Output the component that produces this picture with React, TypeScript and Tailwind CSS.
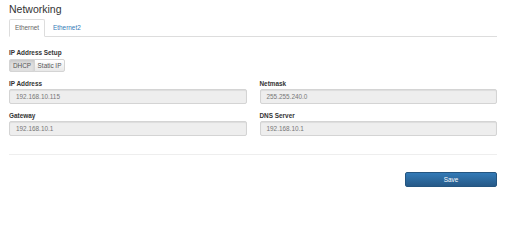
import React from "react";

function Field({ label, value }: { label: string; value: string }) {
  return (
    <div className="flex flex-col">
      <label className="h-[9px] text-[6.4px] leading-[9px] font-bold text-[#333]">{label}</label>
      <div className="mt-[1px] flex h-[15px] items-center rounded-[2px] border border-[#d4d4d4] bg-[#eee] px-[6px] text-[6.4px] text-[#777] shadow-[inset_0_1px_1px_rgba(0,0,0,0.075)]">
        {value}
      </div>
    </div>
  );
}

export default function App() {
  return (
    <div className="min-h-[204px] w-[517px] bg-white pl-[9px] pr-[20px] pt-[3px] font-['Liberation_Sans',Arial,sans-serif] text-[#333]">
      {/* Title */}
      <h3 className="h-[13px] text-[10.5px] leading-[13px] font-normal">Networking</h3>

      {/* Tabs */}
      <div className="mt-[3px] flex h-[18px] items-end border-b border-[#ddd]">
        <div className="-mb-px flex h-[18px] w-[36px] items-center justify-center rounded-t-[2px] border border-[#ddd] border-b-white bg-white text-[6.4px] text-[#666]">
          Ethernet
        </div>
        <div className="flex h-[17px] items-center px-[8px] text-[6.4px] text-[#337ab7]">Ethernet2</div>
      </div>

      {/* IP setup */}
      <div className="mt-[11px] h-[9px] text-[6.4px] leading-[9px] font-bold">IP Address Setup</div>
      <div className="mt-[2px] flex h-[13px] text-[6.4px] text-[#555]">
        <div className="flex w-[26px] items-center justify-center rounded-l-[2px] border border-[#d4d4d4] bg-[#e0e0e0] shadow-[inset_0_2px_3px_rgba(0,0,0,0.1)]">
          DHCP
        </div>
        <div className="-ml-px flex w-[31px] items-center justify-center rounded-r-[2px] border border-[#d4d4d4] bg-gradient-to-b from-white to-[#e8e8e8]">
          Static IP
        </div>
      </div>

      {/* Fields */}
      <div className="mt-[7px] grid grid-cols-2 gap-x-[13px] gap-y-[7px]">
        <Field label="IP Address" value="192.168.10.115" />
        <Field label="Netmask" value="255.255.240.0" />
        <Field label="Gateway" value="192.168.10.1" />
        <Field label="DNS Server" value="192.168.10.1" />
      </div>

      <hr className="mt-[18px] border-t border-[#eee]" />

      <div className="mt-[17px] flex justify-end">
        <button className="flex h-[15px] w-[92px] items-center justify-center rounded-[2px] border border-[#245580] bg-gradient-to-b from-[#337ab7] to-[#265a88] text-[6.4px] text-white">
          Save
        </button>
      </div>
    </div>
  );
}
